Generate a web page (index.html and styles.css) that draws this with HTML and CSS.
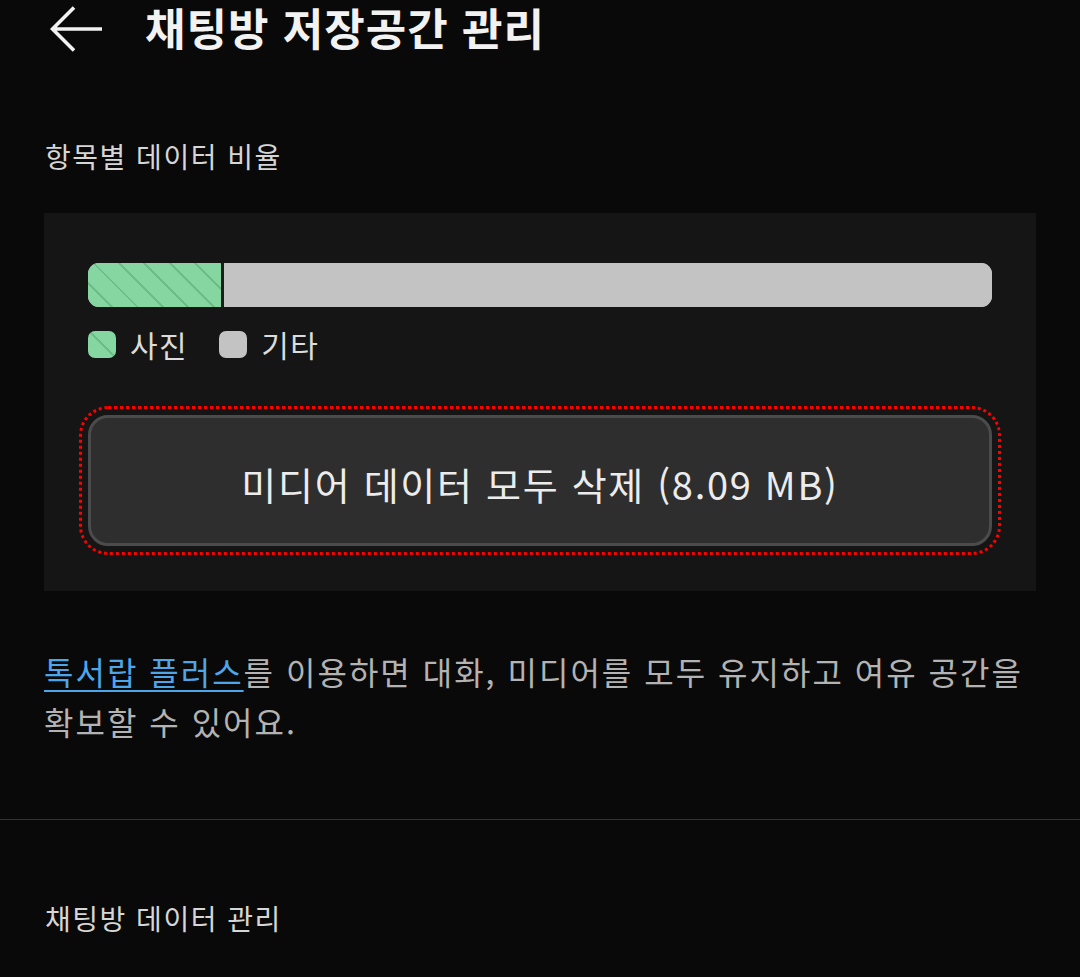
FILE: index.html
```html
<!DOCTYPE html>
<html lang="ko">
<head>
<meta charset="utf-8">
<title>채팅방 저장공간 관리</title>
<link rel="stylesheet" href="styles.css">
</head>
<body>
<header class="topbar">
  <svg class="back" width="54" height="48" viewBox="0 0 54 48" aria-hidden="true">
    <path d="M52 23H3M24 1.5L2.5 23L24 44.5" fill="none" stroke="#f2f2f2" stroke-width="3.6" stroke-linecap="butt" stroke-linejoin="miter"/>
  </svg>
  <h1 class="title">채팅방 저장공간 관리</h1>
</header>

<main>
  <h2 class="section-label">항목별 데이터 비율</h2>
  <section class="card">
    <div class="bar">
      <div class="seg seg-photo" style="width:14.7%"></div>
      <div class="seg seg-other"></div>
    </div>
    <div class="legend">
      <span class="swatch swatch-photo"></span><span class="legend-text">사진</span>
      <span class="swatch swatch-other"></span><span class="legend-text">기타</span>
    </div>
    <button class="delete-btn">미디어 데이터 모두 삭제 (8.09 MB)</button>
  </section>

  <p class="note"><a class="link" href="#">톡서랍 플러스</a>를 이용하면 대화, 미디어를 모두 유지하고 여유 공간을 확보할 수 있어요.</p>

  <hr class="divider">

  <h2 class="section-label bottom">채팅방 데이터 관리</h2>
</main>
</body>
</html>
```

FILE: styles.css
```css
html, body {
  margin: 0;
  padding: 0;
  background: #090909;
  font-family: "Noto Sans CJK KR", "Noto Sans", sans-serif;
  color: #d6d6d6;
}

.topbar {
  display: flex;
  align-items: center;
  height: 56px;
  padding-left: 50px;
}

.back {
  flex: none;
  display: block;
  margin-right: 41px;
  position: relative;
  top: 2px;
}

.title {
  margin: 0;
  font-size: 44px;
  font-weight: 700;
  color: #f2f2f2;
  line-height: 56px;
  letter-spacing: 1px;
  position: relative;
  top: -1px;
}

main {
  padding: 0 44px;
}

.section-label {
  margin: 80px 0 37px 1px;
  font-size: 28px;
  font-weight: 400;
  line-height: 40px;
  letter-spacing: 1.5px;
  color: #d6d6d6;
}

.card {
  background: #151515;
  padding: 50px 44px 45px;
  display: flex;
  flex-direction: column;
}

.bar {
  display: flex;
  height: 44px;
  border-radius: 11px;
  overflow: hidden;
  background: #c3c3c3;
}

.seg-photo {
  background: repeating-linear-gradient(45deg, #86d6a2 0 16px, #6cbd88 16px 18px);
  border-right: 3px solid #1d1d1d;
}

.seg-other {
  flex: 1;
  background: #c3c3c3;
}

.legend {
  display: flex;
  align-items: center;
  height: 30px;
  margin-top: 22px;
}

.swatch {
  width: 28px;
  height: 27px;
  border-radius: 7px;
  flex: none;
}

.swatch-photo {
  background: linear-gradient(45deg, #86d6a2 0 48%, #6cbd88 48% 54%, #86d6a2 54%);
}

.swatch-other {
  background: #c3c3c3;
  margin-left: 31px;
}

.legend-text {
  margin-left: 14px;
  font-size: 30px;
  line-height: 30px;
  letter-spacing: 1.5px;
  color: #dcdcdc;
}

.delete-btn {
  margin-top: 56px;
  height: 131px;
  background: #2e2e2e;
  border: 3px solid #4b4b4b;
  border-radius: 20px;
  color: #ececec;
  font-family: "Noto Sans CJK KR", "Noto Sans", sans-serif;
  font-size: 38px;
  letter-spacing: 1.7px;
  outline: 3px dotted #ff0000;
  outline-offset: 6px;
  padding: 6px 0 0;
}

.note {
  margin: 55px 0 0;
  font-size: 32px;
  line-height: 50px;
  letter-spacing: 2px;
  word-break: keep-all;
  color: #b3b3b3;
}

.link {
  color: #4ea6ea;
  text-decoration: underline;
  text-decoration-thickness: 2px;
  text-underline-offset: 5px;
}

.divider {
  margin: 73px -44px 0;
  border: 0;
  height: 1px;
  background: #333;
}

.section-label.bottom {
  margin-top: 78px;
}
```
